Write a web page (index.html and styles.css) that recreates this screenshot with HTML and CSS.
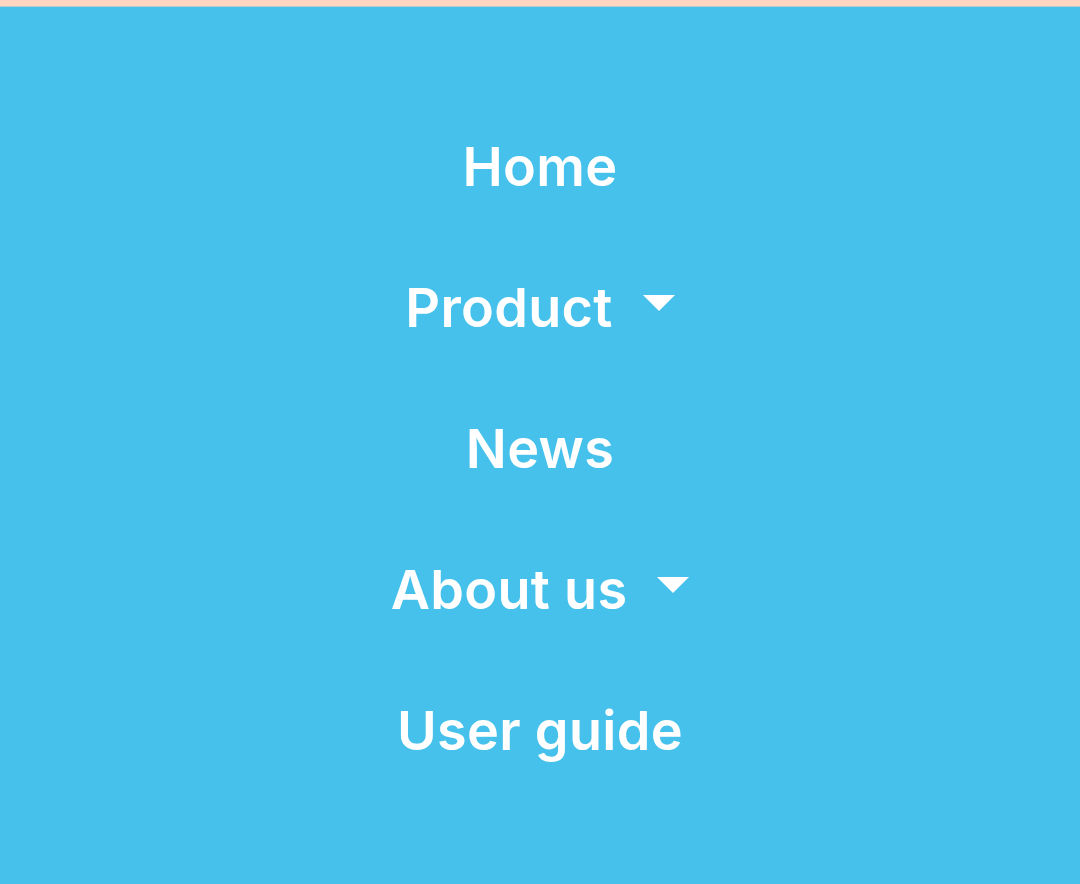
FILE: index.html
```html
<!DOCTYPE html>
<html lang="en">
<head>
<meta charset="utf-8">
<title>Menu</title>
<link rel="stylesheet" href="styles.css">
</head>
<body>
<div class="topbar"></div>
<nav class="menu">
  <ul class="menu-list">
    <li class="menu-item"><a href="#">Home</a></li>
    <li class="menu-item"><a href="#">Product</a><span class="caret"></span></li>
    <li class="menu-item"><a href="#">News</a></li>
    <li class="menu-item"><a href="#">About us</a><span class="caret"></span></li>
    <li class="menu-item"><a href="#">User guide</a></li>
  </ul>
</nav>
</body>
</html>
```

FILE: styles.css
```css
html, body {
  margin: 0;
  padding: 0;
  height: 100%;
}
body {
  background: #45c1eb;
  font-family: Inter, "Noto Sans", sans-serif;
}
.topbar {
  height: 6px;
  background: #ffd6c2;
  border-bottom: 1px solid #b8cdd0;
}
.menu {
  padding-top: 89px;
}
.menu-list {
  list-style: none;
  margin: 0;
  padding: 0;
  display: flex;
  flex-direction: column;
  align-items: center;
}
.menu-item {
  height: 141px;
  display: flex;
  align-items: center;
  justify-content: center;
  gap: 30px;
}
.menu-item a {
  color: #ffffff;
  text-decoration: none;
  font-size: 54px;
  font-weight: 600;
  letter-spacing: 0.3px;
  line-height: 1;
}
.caret {
  width: 0;
  height: 0;
  border-left: 16px solid transparent;
  border-right: 16px solid transparent;
  border-top: 16px solid #ffffff;
  margin-bottom: 10px;
}
```
